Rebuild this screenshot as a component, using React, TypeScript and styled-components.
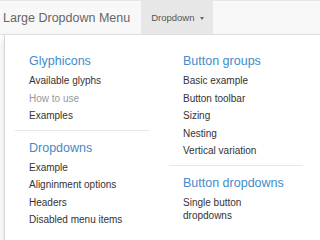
import styled, { createGlobalStyle } from 'styled-components';

const GlobalStyle = createGlobalStyle`
  html, body {
    margin: 0;
    padding: 0;
    background: #ffffff;
    overflow: hidden;
  }
  body {
    font-family: 'Liberation Sans', Arial, Helvetica, sans-serif;
  }
`;

const Page = styled.div`
  width: 320px;
  height: 240px;
  overflow: hidden;
  background: #ffffff;
`;

const Navbar = styled.nav`
  display: flex;
  align-items: stretch;
  height: 33px;
  background: #f8f8f8;
  border-top: 1px solid #e7e7e7;
  border-bottom: 1px solid #e2e2e2;
`;

const Brand = styled.div`
  display: flex;
  align-items: center;
  padding: 0 11px 0 3px;
  font-size: 12.5px;
  color: #666;
  white-space: nowrap;
`;

const NavItem = styled.div<{ $active?: boolean }>`
  display: flex;
  align-items: center;
  gap: 6px;
  width: 72px;
  box-sizing: border-box;
  padding-left: 10px;
  font-size: 9.5px;
  color: #555;
  background: ${(p) => (p.$active ? '#e7e7e7' : 'transparent')};
`;

const Caret = styled.span`
  display: inline-block;
  width: 0;
  height: 0;
  border-left: 2.5px solid transparent;
  border-right: 2.5px solid transparent;
  border-top: 3px solid #666;
  margin-top: 1px;
`;

const Menu = styled.div`
  margin-left: 4px;
  width: 360px;
  box-sizing: border-box;
  padding: 17px 10px 20px 10px;
  background: #fff;
  border-left: 1px solid #d6d6d6;
  box-shadow: -1px 4px 8px rgba(0, 0, 0, 0.12);
  display: grid;
  grid-template-columns: 134px 134px;
  column-gap: 20px;
  align-items: start;
`;

const Column = styled.ul`
  list-style: none;
  margin: 0;
  padding: 0;
`;

const Header = styled.li`
  padding-left: 14px;
  font-size: 12.5px;
  line-height: 18px;
  color: #428bca;
  margin-bottom: 2px;
`;

const Item = styled.li<{ $disabled?: boolean }>`
  padding: 2px 20px 2px 14px;
  font-size: 10px;
  line-height: 13.5px;
  color: ${(p) => (p.$disabled ? '#999' : '#333')};
`;

const Divider = styled.li`
  height: 1px;
  background: #e8e8e8;
  margin: 5px 0 8px;
`;

type Entry = { kind: 'header' | 'item' | 'divider'; text?: string; disabled?: boolean };

const columns: Entry[][] = [
  [
    { kind: 'header', text: 'Glyphicons' },
    { kind: 'item', text: 'Available glyphs' },
    { kind: 'item', text: 'How to use', disabled: true },
    { kind: 'item', text: 'Examples' },
    { kind: 'divider' },
    { kind: 'header', text: 'Dropdowns' },
    { kind: 'item', text: 'Example' },
    { kind: 'item', text: 'Aligninment options' },
    { kind: 'item', text: 'Headers' },
    { kind: 'item', text: 'Disabled menu items' },
  ],
  [
    { kind: 'header', text: 'Button groups' },
    { kind: 'item', text: 'Basic example' },
    { kind: 'item', text: 'Button toolbar' },
    { kind: 'item', text: 'Sizing' },
    { kind: 'item', text: 'Nesting' },
    { kind: 'item', text: 'Vertical variation' },
    { kind: 'divider' },
    { kind: 'header', text: 'Button dropdowns' },
    { kind: 'item', text: 'Single button dropdowns' },
  ],
];

export default function App() {
  return (
    <Page>
      <GlobalStyle />
      <Navbar>
        <Brand>Large Dropdown Menu</Brand>
        <NavItem $active>
          Dropdown <Caret />
        </NavItem>
      </Navbar>
      <Menu>
        {columns.map((col, ci) => (
          <Column key={ci}>
            {col.map((e, i) => {
              if (e.kind === 'header') return <Header key={i}>{e.text}</Header>;
              if (e.kind === 'divider') return <Divider key={i} />;
              return (
                <Item key={i} $disabled={e.disabled}>
                  {e.text}
                </Item>
              );
            })}
          </Column>
        ))}
      </Menu>
    </Page>
  );
}
